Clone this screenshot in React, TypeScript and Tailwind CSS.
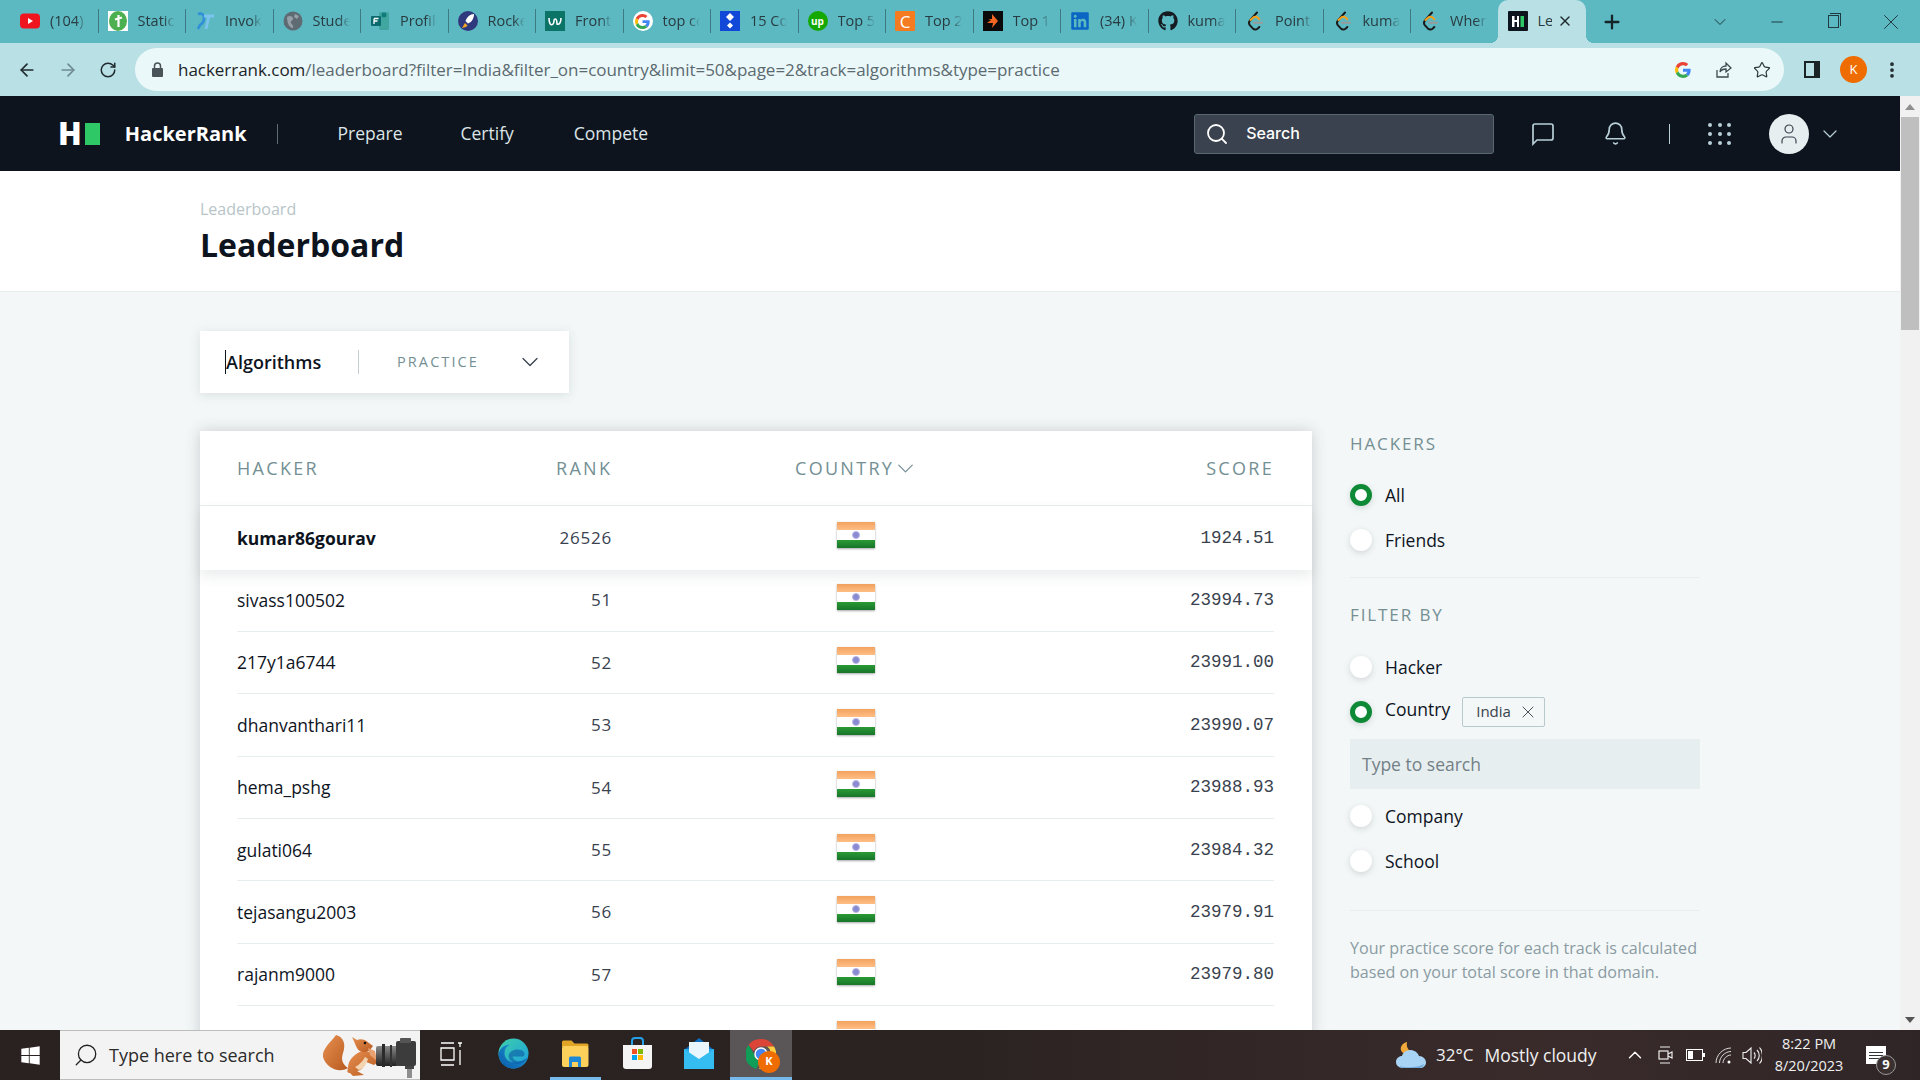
import React from "react";
import { ArrowLeft, ArrowRight, Bell, ChevronDown, ChevronUp, Minus, MoreVertical, Plus, RotateCw, Search, Star, User, X } from "lucide-react";
import { FaGithub, FaLinkedin, FaWindows } from "react-icons/fa";

const GoogleG = ({ size = 20 }: { size?: number }) => (
  <svg width={size} height={size} viewBox="0 0 48 48">
    <path fill="#EA4335" d="M24 9.5c3.5 0 6.700 1.300 9.100 3.500l6.800-6.800C35.800 2.400 30.300 0 24 0 14.600 0 6.500 5.400 2.600 13.200l7.900 6.200C12.400 13.600 17.700 9.500 24 9.500z" />
    <path fill="#4285F4" d="M46.900 24.500c0-1.600-.1-3.100-.4-4.500H24v9h12.900c-.6 3-2.200 5.500-4.700 7.200l7.700 6c4.500-4.200 7-10.300 7-17.700z" />
    <path fill="#FBBC05" d="M10.500 28.600c-.5-1.400-.8-3-.8-4.600s.3-3.200.8-4.600l-7.900-6.200C.9 16.500 0 20.100 0 24s.9 7.500 2.600 10.800l7.900-6.200z" />
    <path fill="#34A853" d="M24 48c6.500 0 11.900-2.100 15.900-5.800l-7.700-6c-2.200 1.400-4.900 2.300-8.200 2.300-6.300 0-11.600-4.200-13.500-9.900l-7.900 6.200C6.500 42.600 14.600 48 24 48z" />
  </svg>
);

const LeetIcon = () => (
  <svg width="20" height="20" viewBox="0 0 20 20" fill="none">
    <path d="M12 1.500 5 9.500c-1.300 1.600-1.300 3.400 0 4.900l2.800 3c1.500 1.400 3.500 1.300 5 0l1.500-1.400" stroke="#1a1a1a" strokeWidth="2" strokeLinecap="round" />
    <path d="M5.500 9 8 6.800c1.400-1.200 3.400-1.200 4.800 0l1.500 1.400" stroke="#F89F1B" strokeWidth="2" strokeLinecap="round" />
    <path d="M9 11.800h8" stroke="#9a9a9a" strokeWidth="2" strokeLinecap="round" />
  </svg>
);

const HrIcon = () => (
  <svg width="20" height="20" viewBox="0 0 20 20">
    <rect width="20" height="20" rx="1" fill="#0E141E" />
    <path d="M4 5h2.500v4h2.500V5h2v11H9v-5H6.500v5H4z" fill="#fff" />
    <rect x="12.500" y="5" width="3.500" height="11" fill="#2EC866" />
  </svg>
);

const favicons: React.ReactNode[] = [
  <svg width="20" height="20" viewBox="0 0 20 20"><rect y="2.500" width="20" height="15" rx="4" fill="#F0141E" /><path d="M8 7v6l5-3z" fill="#fff" /></svg>,
  <svg width="20" height="20" viewBox="0 0 20 20"><rect width="20" height="20" fill="#fff" /><ellipse cx="10" cy="10" rx="9" ry="10" fill="#4CAF50" /><path d="M10.500 4v12M7 8.500l7-2" stroke="#fff" strokeWidth="2.200" /></svg>,
  <svg width="20" height="20" viewBox="0 0 20 20" fill="none"><path d="M3 3c3.500-1 6 0 6 4 0 4-2 6-4 7l-2 4" stroke="#2F8FD8" strokeWidth="2.600" /><path d="M9 5h10M14 5l-3 13" stroke="#7CC4F0" strokeWidth="2.800" /></svg>,
  <svg width="20" height="20" viewBox="0 0 20 20"><circle cx="10" cy="10" r="9.500" fill="#5F6B73" /><path d="M4 6c3-2 5-1 6 1s-3 3-2 5 3 2 2 5c-3 0-6-4-6-11zM12 3l4 2-2 3-3-2z" fill="#95A0A8" /></svg>,
  <svg width="20" height="20" viewBox="0 0 20 20"><rect x="9" y="1" width="10" height="18" rx="1.500" fill="#41A5A0" /><circle cx="14" cy="4" r="2.500" fill="#0F7B7B" /><rect x="1" y="5" width="10" height="10" rx="1" fill="#0B6A6E" /><path d="M4 7.500h4.500M4 7.500v5.500M4 10h3.500" stroke="#fff" strokeWidth="1.300" fill="none" /></svg>,
  <svg width="20" height="20" viewBox="0 0 20 20"><circle cx="10" cy="10" r="10" fill="#2F3A7E" /><path d="M16 3c-4 0-7 3-8.500 7l2.500 2.500c4-1.500 6-5.500 6-9.500z" fill="#fff" /><path d="M7 12l-3 5 4-1 1.500-1.500z" fill="#F5A623" /></svg>,
  <svg width="20" height="20" viewBox="0 0 20 20"><rect width="20" height="20" fill="#0B7466" /><path d="M4 7c0 6 2 8 4 6s0-5 2-5 2 3 2 5c2 1 4-1 4-6" stroke="#fff" strokeWidth="1.600" fill="none" /></svg>,
  <div className="flex h-5 w-5 items-center justify-center rounded-full bg-white"><GoogleG size={15} /></div>,
  <svg width="20" height="20" viewBox="0 0 20 20"><rect width="20" height="20" fill="#1148D8" /><path d="M10 2l4 4-4 4-4-4z" fill="#fff" /><path d="M10 11.500l3 3-3 3-3-3z" fill="#fff" /></svg>,
  <div className="flex h-5 w-5 items-center justify-center rounded-full bg-[#14A800] text-[10px] font-bold leading-none text-white">up</div>,
  <div className="flex h-5 w-5 items-center justify-center rounded-[1px] bg-[#F47B20] text-[17px] leading-none text-white">C</div>,
  <svg width="20" height="20" viewBox="0 0 20 20"><rect width="20" height="20" fill="#0a0a0a" /><path d="M9 3l6 7-6 7 1-5H4l4-3-3-1 4 0z" fill="#F26522" /></svg>,
  <div className="flex h-5 w-5 items-center justify-center text-[#0A66C2]"><FaLinkedin size={20} /></div>,
  <div className="flex h-5 w-5 items-center justify-center text-[#161b22]"><FaGithub size={20} /></div>,
  <LeetIcon />,
  <LeetIcon />,
  <LeetIcon />,
];

const tabs = ["(104)", "Static", "Invok", "Stude", "Profile", "Rocke", "Front-", "top cc", "15 Co", "Top 5", "Top 2", "Top 1", "(34) K", "kuma", "Points", "kuma", "Wher"];

const TabStrip = () => (
  <div className="flex h-[43px] bg-[#5CB8C1] pl-[11px]">
    {tabs.map((title, i) => (
      <div key={i} className="flex h-full w-[87.500px] items-center pb-[1px]">
        <div className="ml-[9px] flex h-5 w-5 shrink-0 items-center justify-center">{favicons[i]}</div>
        <span className="ml-[10px] w-[37px] overflow-hidden whitespace-nowrap text-[14.500px] text-[#283b40] [mask-image:linear-gradient(90deg,#000_70%,transparent)]">{title}</span>
        <span className="ml-auto h-6 w-px shrink-0 bg-[#3d7a82]" />
      </div>
    ))}
    {/* active tab */}
    <div className="relative ml-[-1px] flex h-full w-[88px] items-center rounded-t-[10px] bg-[#B8E0E5] pb-[1px] pl-[10px]">
      <span className="absolute bottom-0 left-[-8px] h-2 w-2 bg-[radial-gradient(circle_at_0_0,transparent_8px,#B8E0E5_8px)]" />
      <span className="absolute bottom-0 right-[-8px] h-2 w-2 bg-[radial-gradient(circle_at_100%_0,transparent_8px,#B8E0E5_8px)]" />
      <HrIcon />
      <span className="ml-[10px] w-[14px] overflow-hidden text-[14.500px] text-[#283b40]">Le</span>
      <X size={16} strokeWidth={2} className="ml-[5px] text-[#1f2a2e]" />
    </div>
    <div className="flex w-[52px] items-center justify-center"><Plus size={22} strokeWidth={2.500} className="text-[#15252a]" /></div>
    <div className="ml-auto flex pr-px text-[#1f3a40]">
      <div className="flex w-[57px] items-center justify-center"><ChevronDown size={20} strokeWidth={1.200} /></div>
      <div className="flex w-[57px] items-center justify-center"><Minus size={18} strokeWidth={1.300} /></div>
      <div className="flex w-[57px] items-center justify-center">
        <div className="relative h-[13px] w-[11px] border border-[#1f3a40]"><span className="absolute right-[-3px] top-[-3px] h-[13px] w-[11px] border-r border-t border-[#1f3a40]" /></div>
      </div>
      <div className="flex w-[57px] items-center justify-center"><X size={26} strokeWidth={0.900} /></div>
    </div>
  </div>
);

const AddressBar = () => (
  <div className="flex h-[53px] items-center bg-[#B8E0E5] text-[#1f2a2e]">
    <div className="flex w-[135px] shrink-0 items-center">
      <div className="flex w-[54px] justify-center"><ArrowLeft size={20} strokeWidth={2} /></div>
      <div className="flex w-[27px] justify-center text-[#6f8a90]"><ArrowRight size={20} strokeWidth={2} /></div>
      <div className="flex w-[54px] justify-center"><RotateCw size={18} strokeWidth={2} /></div>
    </div>
    <div className="flex h-[43px] w-[1649px] items-center rounded-full bg-[#EBF8F9] pl-[17px]">
      <svg width="11" height="15" viewBox="0 0 11 15" className="shrink-0"><rect y="6" width="11" height="9" rx="1" fill="#4a5458" /><path d="M2.500 6V4a3 3 0 0 1 6 0v2" stroke="#4a5458" strokeWidth="1.500" fill="none" /></svg>
      <span className="ml-[15px] whitespace-nowrap text-[17px] tracking-[-0.035px] text-[#5b6a70]"><span className="text-[#1c2427]">hackerrank.com</span>/leaderboard?filter=India&amp;filter_on=country&amp;limit=50&amp;page=2&amp;track=algorithms&amp;type=practice</span>
      <div className="ml-auto flex items-center pr-[13px]">
        <GoogleG size={16} />
        <svg width="18" height="18" viewBox="0 0 18 18" fill="none" stroke="#3d4a4f" strokeWidth="1.300" className="ml-[23px]"><path d="M3 9v7h11v-4" /><path d="M6 11c0-4 3-6 6-6V2l5 5-5 4V8c-3 0-5 1-6 3z" /></svg>
        <Star size={18} strokeWidth={1.600} className="ml-[21.500px] text-[#2b373b]" />
      </div>
    </div>
    <div className="ml-[20px] h-[17px] w-[16px] border-[2px] border-r-[6px] border-[#1a2326]" />
    <div className="ml-[20px] flex h-[27px] w-[27px] items-center justify-center rounded-full bg-[#EF6C00] text-[13px] text-white">K</div>
    <MoreVertical size={20} strokeWidth={2.500} className="ml-[15px] text-[#1f2a2e]" />
  </div>
);

const TopNav = () => (
  <div className="flex h-[75px] items-center bg-[#0E141E] pl-[58px]">
    <div className="flex items-center">
      <span className="text-[31px] font-extrabold leading-none text-white">H</span>
      <span className="ml-[3px] h-[22px] w-[15px] bg-[#2EC866]" />
    </div>
    <span className="ml-[25px] text-[20px] font-bold text-white">HackerRank</span>
    <span className="ml-[30px] h-5 w-px bg-[#5d6b72]" />
    <span className="ml-[60px] text-[17.500px] text-[#DCE5E7]">Prepare</span>
    <span className="ml-[58px] text-[17.500px] text-[#DCE5E7]">Certify</span>
    <span className="ml-[60px] text-[17.500px] text-[#DCE5E7]">Compete</span>
    <div className="ml-[546px] flex h-[40px] w-[300px] items-center rounded-[3px] border border-[#576871] bg-[#39424E] pl-[10px]">
      <Search size={24} strokeWidth={1.800} className="text-white" />
      <span className="ml-[17px] pb-[2px] font-['Inter'] text-[16px] font-medium text-white">Search</span>
    </div>
    <svg width="24" height="24" viewBox="0 0 24 24" fill="none" stroke="#B7CFD8" strokeWidth="1.700" className="ml-[37px]"><path d="M2 22V4a2 2 0 0 1 2-2h16a2 2 0 0 1 2 2v12a2 2 0 0 1-2 2H6z" /></svg>
    <Bell size={25} strokeWidth={1.600} className="ml-[48px] text-[#B7CFD8]" />
    <span className="ml-[41px] h-5 w-px bg-[#B7CFD8]" />
    <div className="ml-[38px] grid grid-cols-3 gap-x-[5.500px] gap-y-[5px]">
      {Array.from({ length: 9 }).map((_, i) => (
        <span key={i} className="h-[4px] w-[4px] rounded-full bg-[#B7CFD8]" />
      ))}
    </div>
    <div className="ml-[38px] flex h-[40px] w-[40px] items-center justify-center rounded-full bg-[#E7EEEF]"><User size={24} strokeWidth={1.200} className="text-[#39424E]" /></div>
    <ChevronDown size={24} strokeWidth={1.200} className="ml-[9px] text-[#B7CFD8]" />
  </div>
);

const Flag = () => (
  <div className="relative flex h-[26px] w-[38px] flex-col overflow-hidden shadow-[0_1px_2px_rgba(0,0,0,0.35)]">
    <div className="h-[8px] bg-gradient-to-b from-[#F3A25E] to-[#FFBE85]" />
    <div className="flex flex-1 items-center justify-center bg-white">
      <span className="h-[8px] w-[8px] rounded-full border border-[#B9B9E6] bg-[#8A8AD0]" />
    </div>
    <div className="h-[8px] bg-gradient-to-b from-[#2A9A35] to-[#17752A]" />
  </div>
);

const rows = [
  ["sivass100502", "51", "23994.73"],
  ["217y1a6744", "52", "23991.00"],
  ["dhanvanthari11", "53", "23990.07"],
  ["hema_pshg", "54", "23988.93"],
  ["gulati064", "55", "23984.32"],
  ["tejasangu2003", "56", "23979.91"],
  ["rajanm9000", "57", "23979.80"],
  ["", "", ""],
];

const Row = ({ name, rank, score, bold }: { name: string; rank: string; score: string; bold?: boolean }) => (
  <div className="flex h-full items-center text-[#39424E]">
    <span className={`w-[281px] text-[17.500px] text-[#0E141E] ${bold ? "font-bold" : ""}`}>{name}</span>
    <span className="w-[94px] text-right text-[17px] tracking-[0.8px]">{rank}</span>
    <div className="ml-[183px] flex w-[122px] justify-center pb-[6px]"><Flag /></div>
    <span className="flex-1 text-right font-['Liberation_Mono'] text-[17.500px]">{score}</span>
  </div>
);

const LeaderTable = () => (
  <div className="w-[1112px] shrink-0 bg-white shadow-[0_0_14px_rgba(57,66,78,0.22)]">
    <div className="flex h-[75px] items-center border-b border-[#E7EEEF] pl-[37px] pr-[38px] text-[18px] tracking-[2.300px] text-[#738F93]">
      <span className="w-[319px]">HACKER</span>
      <span className="w-[239px]">RANK</span>
      <span>COUNTRY</span>
      <ChevronDown size={27} strokeWidth={1.100} className="-ml-[2px]" />
      <span className="ml-auto">SCORE</span>
    </div>
    <div className="relative z-10 h-[63.500px] bg-white pl-[37px] pr-[38px] shadow-[0_6px_12px_rgba(57,66,78,0.1)]">
      <Row name="kumar86gourav" rank="26526" score="1924.51" bold />
    </div>
    {rows.map((r, i) => (
      <div key={i} className="h-[62.400px] pl-[37px] pr-[38px]">
        <div className="h-full border-b border-[#E7EEEF]">
          <Row name={r[0]} rank={r[1]} score={r[2]} />
        </div>
      </div>
    ))}
  </div>
);

const Radio = ({ label, on, children }: { label: string; on?: boolean; children?: React.ReactNode }) => (
  <div className="flex h-[45px] items-center">
    <span className={`h-[22px] w-[22px] shrink-0 rounded-full bg-white shadow-[0_2px_6px_rgba(57,66,78,0.18)] ${on ? "border-[5px] border-[#0E8A37]" : ""}`} />
    <span className={`ml-[13px] text-[17.500px] text-[#0E141E] ${children ? "pb-[6px]" : ""}`}>{label}</span>
    {children}
  </div>
);

const SideHeading = ({ text }: { text: string }) => (
  <div className="text-[17px] leading-[26px] tracking-[1.900px] text-[#738F93]">{text}</div>
);

const Sidebar = () => (
  <div className="ml-[38px] w-[350px] shrink-0">
    <SideHeading text="HACKERS" />
    <div className="mt-[15.500px]">
      <Radio label="All" on />
      <Radio label="Friends" />
    </div>
    <div className="mt-[14.500px] border-t border-[#E7EEEF] pt-[24px]">
      <SideHeading text="FILTER BY" />
    </div>
    <div className="mt-[16.500px]">
      <Radio label="Hacker" />
      <Radio label="Country" on>
        <div className="ml-[12px] mb-[1px] flex h-[30px] w-[83px] items-center rounded-[2px] border border-[#B7C9CC] pl-[13px] text-[15px] text-[#39424E]">
          India
          <X size={20} strokeWidth={1.100} className="ml-[7px] text-[#39424E]" />
        </div>
      </Radio>
    </div>
    <div className="mt-[4.500px] flex h-[50px] items-center bg-[#E7EEEF] pl-[12px] text-[17.500px] text-[#738087]">Type to search</div>
    <div className="mt-[4.500px]">
      <Radio label="Company" />
      <Radio label="School" />
    </div>
    <div className="mt-[26.500px] border-t border-[#E7EEEF] pt-[25px] text-[16.100px] leading-[24px] text-[#8A9BA3]">
      Your practice score for each track is calculated based on your total score in that domain.
    </div>
  </div>
);

const Scrollbar = () => (
  <div className="flex w-[20px] shrink-0 flex-col items-center bg-[#F1F1F1]">
    <div className="flex h-[21px] items-center justify-center"><span className="border-x-[5px] border-b-[6px] border-x-transparent border-b-[#8f8f8f]" /></div>
    <div className="h-[213px] w-[18px] bg-[#BFBFBF]" />
    <div className="mt-auto flex h-[21px] items-center justify-center"><span className="border-x-[5px] border-t-[6px] border-x-transparent border-t-[#555]" /></div>
  </div>
);

const Squirrel = () => (
  <svg width="94" height="46" viewBox="0 0 94 46">
    <defs>
      <linearGradient id="lens" x1="0" x2="0" y1="0" y2="1"><stop offset="0" stopColor="#8a8a8a" /><stop offset="0.5" stopColor="#555" /><stop offset="1" stopColor="#222" /></linearGradient>
      <linearGradient id="fur" x1="0" x2="1" y1="0" y2="1"><stop offset="0" stopColor="#E89050" /><stop offset="1" stopColor="#B85A20" /></linearGradient>
    </defs>
    <path d="M14 3C22 5 24 13 21 21 19 27 20 32 26 36 16 42 4 35 1 25 0 17 8 11 14 3z" fill="url(#fur)" />
    <path d="M26 36C26 27 34 21 40 19L48 20 56 30 52 33 44 30C42 36 38 39 35 39L42 43 31 44 28 41C25 41 25 39 26 36z" fill="url(#fur)" />
    <path d="M30 5L35 8C39 6 44 8 47 11L51 14 48 18C43 22 37 20 35 16 33 12 32 9 30 5z" fill="url(#fur)" />
    <circle cx="43" cy="11" r="1.300" fill="#111" />
    <path d="M33 35C37 33 41 29 43 25L46 27C44 33 41 37 37 38z" fill="#F3D3B0" />
    <path d="M46 16L53 19 55 29 48 23z" fill="#E8A070" />
    <rect x="54" y="14" width="22" height="20" rx="2" fill="url(#lens)" />
    <rect x="60" y="12" width="3" height="23" fill="#2a2a2a" />
    <rect x="68" y="13" width="2" height="22" fill="#333" />
    <rect x="74" y="9" width="20" height="25" rx="2" fill="#3c3c3c" />
    <rect x="78" y="6" width="11" height="5" rx="1" fill="#555" />
    <rect x="85" y="34" width="5" height="12" fill="#8e8e8e" />
    <rect x="83" y="34" width="9" height="3" fill="#444" />
  </svg>
);

const TaskSlot = ({ children, underline, active }: { children: React.ReactNode; underline?: boolean; active?: boolean }) => (
  <div className={`flex h-full w-[62px] flex-col items-center ${active ? "bg-[#5a5556]" : ""}`}>
    <div className="flex flex-1 items-center justify-center">{children}</div>
    <span className={`h-[3px] ${active ? "w-full bg-[#76B9ED]" : underline ? "w-[51px] bg-[#76B9ED]" : "w-0"}`} />
  </div>
);

const Taskbar = () => (
  <div className="flex h-[50px] shrink-0 items-center bg-[linear-gradient(90deg,#2A2220,#2B2322_50%,#3A2B2B_80%,#2F2527)] text-white">
    <div className="flex h-full w-[60px] items-center justify-center"><FaWindows size={21} /></div>
    <div className="flex h-full w-[360px] items-center border-y border-[#BDBDBD] bg-[#F3F3F3] pl-[13px] pr-[4px]">
      <Search size={26} strokeWidth={1.200} className="-scale-x-100 text-[#222]" />
      <span className="ml-[10px] text-[18px] text-[#2b2b2b]">Type here to search</span>
      <div className="ml-auto"><Squirrel /></div>
    </div>
    <div className="flex h-full">
      <TaskSlot>
        <svg width="22" height="24" viewBox="0 0 22 24" fill="none" stroke="#fff" strokeWidth="1.300"><path d="M1 1h13M1 23h13M1 6h13v12H1zM20 1v4M20 8v15M18 1h4" /></svg>
      </TaskSlot>
      <TaskSlot>
        <svg width="31" height="31" viewBox="0 0 32 32">
          <defs>
            <linearGradient id="eg" x1="0" x2="1" y1="0" y2="1"><stop offset="0" stopColor="#3FD0A8" /><stop offset="1" stopColor="#1B9DE2" /></linearGradient>
            <linearGradient id="eb" x1="0" x2="1" y1="1" y2="0"><stop offset="0" stopColor="#0C59A4" /><stop offset="1" stopColor="#1B9DE2" /></linearGradient>
          </defs>
          <circle cx="16" cy="16" r="15.500" fill="url(#eg)" />
          <path d="M31 19c-2 8-9 12.500-15 12.500C8 31.500 1 26 .5 16 3 9 8 7 12 7c-4 2-6 6-5 11 2 8 14 11 24 1z" fill="url(#eb)" />
          <path d="M11 18c1-5 8-8 14-5 3 2 3 5 1 6h-11c1 5 8 7 15 2-4 6-11 7-15 4-3-2-4-4-4-7z" fill="#0C59A4" opacity="0.6" />
        </svg>
      </TaskSlot>
      <TaskSlot underline>
        <svg width="28" height="30" viewBox="0 0 28 30">
          <path d="M1 3a1.500 1.500 0 0 1 1.500-1.500h8l3 3H26a1.500 1.500 0 0 1 1.500 1.500V8H1z" fill="#E0A526" />
          <rect x="1" y="7" width="26.500" height="21" rx="2" fill="#FCD05A" />
          <path d="M8 28v-9a1.500 1.500 0 0 1 1.500-1.500h9A1.500 1.500 0 0 1 20 19v9h-3v-5h-6v5z" fill="#1E88D6" />
        </svg>
      </TaskSlot>
      <TaskSlot>
        <svg width="29" height="33" viewBox="0 0 29 33">
          <path d="M9 8V4a3 3 0 0 1 3-3h5a3 3 0 0 1 3 3v4" stroke="#23A0E8" strokeWidth="2" fill="none" />
          <path d="M0 8h29v21a3 3 0 0 1-3 3H3a3 3 0 0 1-3-3z" fill="#F4F4F4" />
          <rect x="9" y="12" width="5" height="5" fill="#F25022" />
          <rect x="15" y="12" width="5" height="5" fill="#7FBA00" />
          <rect x="9" y="18" width="5" height="5" fill="#00A4EF" />
          <rect x="15" y="18" width="5" height="5" fill="#FFB900" />
        </svg>
      </TaskSlot>
      <TaskSlot>
        <svg width="30" height="31" viewBox="0 0 30 31">
          <path d="M15 0l15 12H0z" fill="#0F6CBD" />
          <rect y="11" width="30" height="20" fill="#28A8EA" />
          <path d="M5 4h20v14l-10 6-10-6z" fill="#EAF6FD" />
          <path d="M0 11l15 10 15-10v20H0z" fill="#35BDF2" />
        </svg>
      </TaskSlot>
      <TaskSlot active>
        <div className="relative h-[30px] w-[30px]">
          <svg width="30" height="30" viewBox="0 0 30 30">
            <path d="M15 0a15 15 0 0 1 13 7.500H15a7.500 7.500 0 0 0-7 5L2.500 6A15 15 0 0 1 15 0z" fill="#DB4437" />
            <path d="M2.500 6L9 17a7.500 7.500 0 0 0 5 5.500L10 30A15 15 0 0 1 2.500 6z" fill="#0F9D58" />
            <path d="M28 7.500A15 15 0 0 1 13 30l6-9a7.500 7.500 0 0 0 2-13.500z" fill="#FFCD40" />
            <circle cx="15" cy="15" r="6" fill="#4285F4" stroke="#fff" strokeWidth="1.500" />
          </svg>
          <div className="absolute bottom-[-4px] right-[-4px] flex h-[22px] w-[22px] items-center justify-center rounded-full bg-[#EF6C00] text-[11px] font-bold text-white">K</div>
        </div>
      </TaskSlot>
    </div>
    {/* system tray */}
    <div className="ml-[604px] flex items-center">
      <svg width="30" height="30" viewBox="0 0 30 30">
        <path d="M11 2c-1 6 2 10 7 9-2 4-8 5-12 1C3 8 6 3 11 2z" fill="#F2A93B" />
        <path d="M7 28c-4 0-7-2.500-7-6s3-6 6-6c1-4 5-6 9-6 4 .5 7 3 8 6 4 0 7 3 7 6.500s-3 5.500-6 5.500z" fill="#A9D3F5" />
        <path d="M4 26c5 2 18 2 24-2-1 3-3 4-5 4H7c-1 0-2-1-3-2z" fill="#6FA9DC" />
      </svg>
      <span className="ml-[10px] whitespace-nowrap text-[17px] text-[#F0F0F0]">32°C</span>
      <span className="ml-[11px] whitespace-nowrap text-[17.500px] text-[#F0F0F0]">Mostly cloudy</span>
      <ChevronUp size={22} strokeWidth={1.500} className="ml-[27px]" />
      <svg width="16" height="20" viewBox="0 0 16 20" fill="none" stroke="#eee" strokeWidth="1.200" className="ml-[11px]"><path d="M3 2h10M3 18h10" /><rect x="2" y="6" width="9" height="8" /><path d="M11 9l4-2v6l-4-2" /></svg>
      <svg width="19" height="12" viewBox="0 0 19 12" fill="none" className="ml-[13px]"><rect x=".5" y=".5" width="16" height="11" stroke="#fff" /><rect x="2" y="2" width="5" height="8" fill="#fff" /><rect x="17" y="4" width="2" height="4" fill="#fff" /></svg>
      <svg width="17" height="17" viewBox="0 0 17 17" fill="none" stroke="#d8d8d8" strokeWidth="1" className="ml-[10.500px]"><path d="M1 16C1 8 8 1 16 1M4.500 16C4.500 10 10 4.500 16 4.500M8 16c0-4 4-8 8-8" /><circle cx="14" cy="15" r="1.500" fill="#fff" stroke="none" /></svg>
      <svg width="20" height="19" viewBox="0 0 20 19" fill="none" stroke="#eee" strokeWidth="1.100" className="ml-[10px]"><path d="M1 6.500h3L9 2v15l-5-4.500H1zM12 6.500c1.500 1.500 1.500 4.500 0 6M15 4c3 3 3 8 0 11M17.500 1.500c4 4.500 4 11.500 0 16" /></svg>
      <div className="ml-[1px] flex w-[92px] flex-col items-center text-[14.500px] leading-[22px] text-[#F0F0F0]">
        <span>8:22 PM</span>
        <span>8/20/2023</span>
      </div>
      <div className="relative ml-[11px] flex h-[18px] w-[20px] flex-col justify-center gap-[2px] bg-white px-[3px]">
        <span className="h-px bg-[#333]" />
        <span className="h-px bg-[#333]" />
        <span className="h-px bg-[#333]" />
        <div className="absolute right-[-10px] top-[9px] flex h-[20px] w-[20px] items-center justify-center rounded-full border border-[#999] bg-[#3a3030] text-[13px] font-bold">9</div>
      </div>
    </div>
  </div>
);

export default function App() {
  return (
    <div className="flex h-screen w-full flex-col overflow-hidden bg-[#F3F7F7] font-['Open_Sans',sans-serif]">
      <TabStrip />
      <AddressBar />
      <div className="flex min-h-0 flex-1">
        <div className="min-w-0 flex-1 overflow-hidden">
          <TopNav />
          <div className="h-[121px] border-b border-[#E7EEEF] bg-white pl-[200px] pt-[26px]">
            <div className="text-[16px] leading-[24px] text-[#B7C5C8]">Leaderboard</div>
            <h1 className="mt-[4px] text-[32px] font-bold leading-[40px] text-[#0E141E]">Leaderboard</h1>
          </div>
          <div className="pl-[200px] pt-[39px]">
            <div className="flex h-[62px] w-[369px] items-center bg-white pl-[25px] shadow-[0_2px_10px_rgba(57,66,78,0.13)]">
              <div className="flex h-[24px] w-[133px] items-center border-l border-[#0E141E]">
                <span className="text-[18px] font-semibold text-[#0E141E]">Algorithms</span>
              </div>
              <span className="h-[24px] w-px bg-[#C2CFD2]" />
              <span className="ml-[38px] text-[14.500px] tracking-[2.100px] text-[#738F93]">PRACTICE</span>
              <ChevronDown size={28} strokeWidth={1.100} className="ml-[37px] text-[#39424E]" />
            </div>
            <div className="mt-[38px] flex items-start">
              <LeaderTable />
              <Sidebar />
            </div>
          </div>
        </div>
        <Scrollbar />
      </div>
      <Taskbar />
    </div>
  );
}
